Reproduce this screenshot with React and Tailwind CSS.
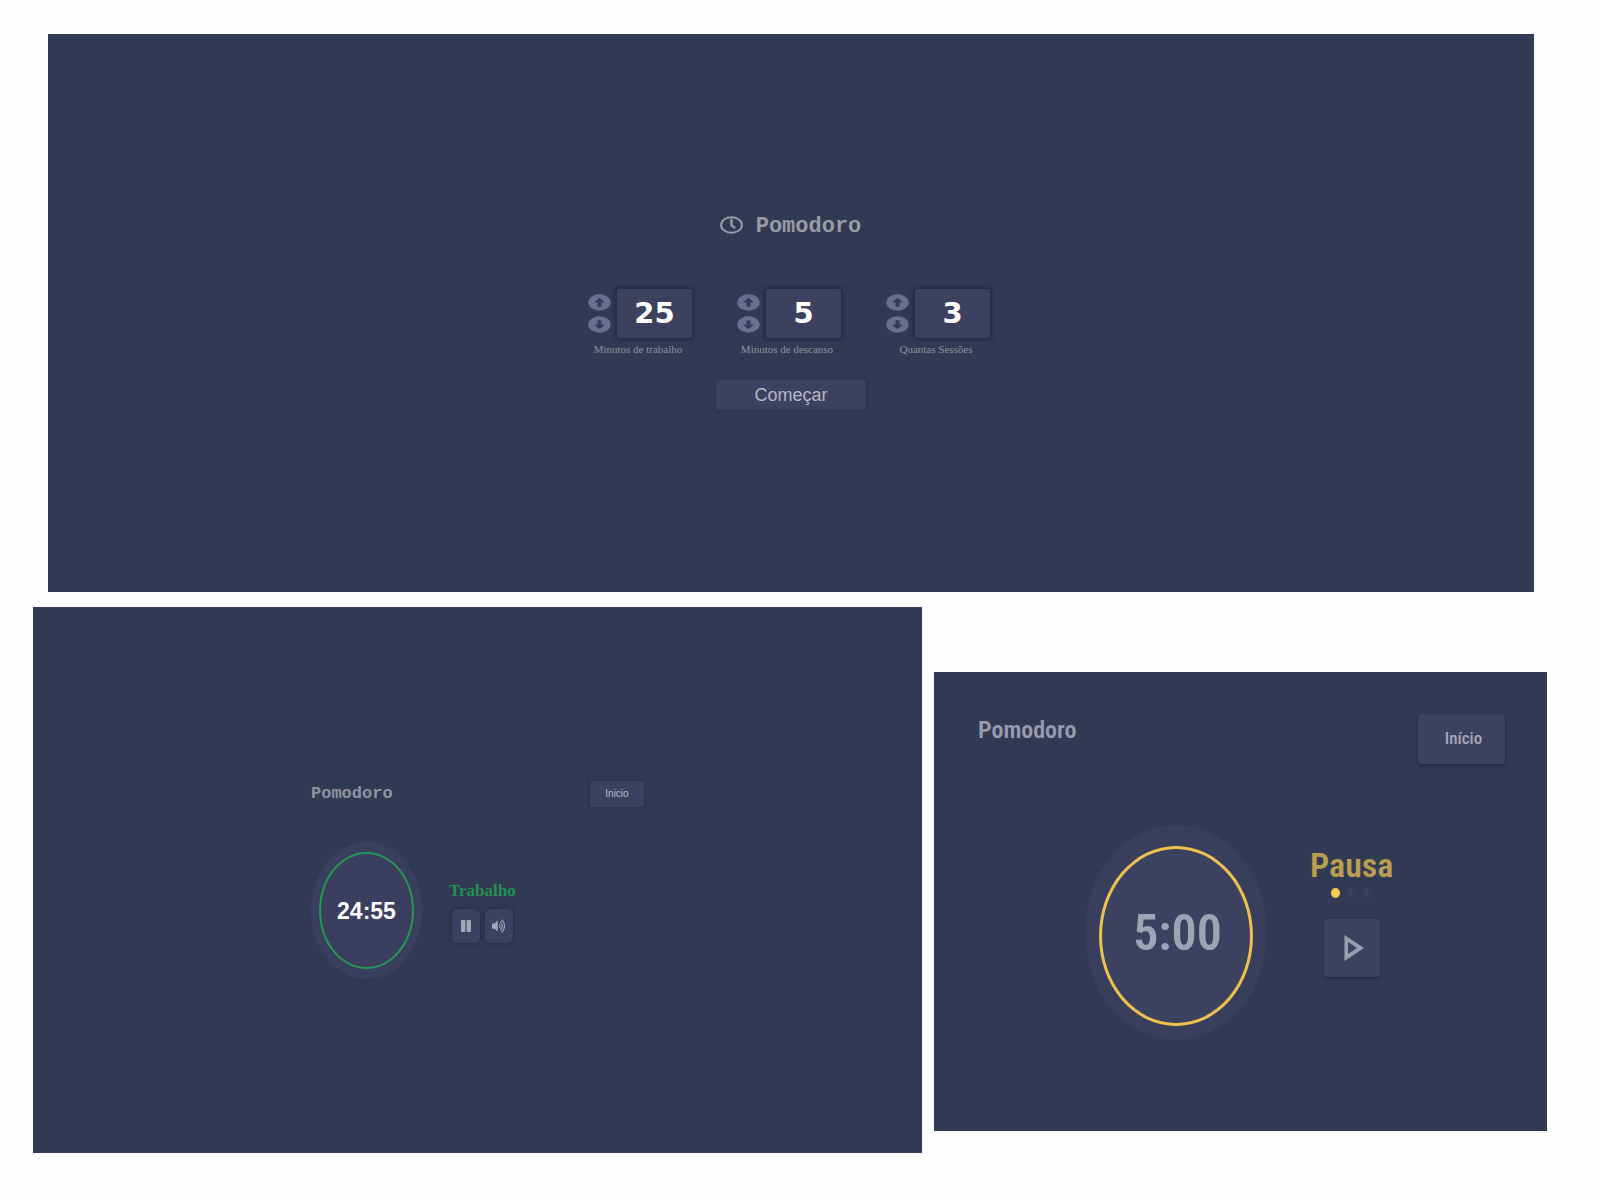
import { useState } from "react";
import { FaVolumeUp } from "react-icons/fa";

function ArrowButton({ down, label, onClick }) {
  return (
    <button type="button" aria-label={label} onClick={onClick} className="block h-[17px] w-[23px]">
      <svg viewBox="0 0 23 17" className={down ? "h-full w-full rotate-180" : "h-full w-full"}>
        <ellipse cx="11.5" cy="8.5" rx="11.2" ry="8.3" fill="#6a6e8f" />
        <path d="M11.5 3.8 L17 8.6 H13.5 V12.8 H9.5 V8.6 H6 Z" fill="#373b5a" />
      </svg>
    </button>
  );
}

function Setting({ id, label, initial }) {
  const [value, setValue] = useState(initial);
  return (
    <div className="flex w-[104px] flex-col">
      <div className="flex items-center gap-[6px]">
        <div className="flex flex-col gap-[5px] pb-px">
          <ArrowButton label={`Aumentar ${label}`} onClick={() => setValue(value + 1)} />
          <ArrowButton down label={`Diminuir ${label}`} onClick={() => setValue(Math.max(1, value - 1))} />
        </div>
        <input
          id={id}
          type="text"
          inputMode="numeric"
          value={value}
          onChange={(e) => setValue(Number(e.target.value) || 1)}
          className="h-[49px] w-[75px] rounded-[2px] bg-[#3d4160] pb-[2px] text-center font-['DejaVu_Sans',sans-serif] text-[29px] font-bold text-white shadow-[0_0_4px_1px_#1e2344]"
        />
      </div>
      <label
        htmlFor={id}
        className="mt-[3px] whitespace-nowrap pr-1 text-center font-['Liberation_Serif',serif] text-[11px] leading-4 text-[#90939f]"
      >
        {label}
      </label>
    </div>
  );
}

function SetupPanel() {
  return (
    <section className="ml-[15px] mr-[13px] flex h-[558px] flex-col items-center bg-[#323952] pt-[177px]">
      <h1 className="flex items-center gap-3 pr-px font-['Liberation_Mono',monospace] text-[22px] font-bold leading-6 text-[#999ba7]">
        <svg viewBox="0 0 24 18" className="h-[18px] w-6" fill="none" stroke="currentColor" strokeWidth="2">
          <ellipse cx="11.5" cy="9" rx="10.4" ry="7.8" />
          <path d="M11.5 4 V9.4 L14.5 11.6" strokeWidth="2.4" strokeLinecap="round" />
        </svg>
        <span className="pt-1">Pomodoro</span>
      </h1>
      <div className="mt-[50px] flex gap-[45px] pr-1">
        <Setting id="work" label="Minutos de trabalho" initial={25} />
        <Setting id="rest" label="Minutos de descanso" initial={5} />
        <Setting id="sessions" label="Quantas Sessões" initial={3} />
      </div>
      <button
        type="button"
        className="mt-[23px] h-[30px] w-[150px] rounded-[2px] bg-[#3d4160] font-['Liberation_Sans',sans-serif] text-[18px] leading-6 text-[#b6b7c0] shadow-[0_0_3px_#262b4a]"
      >
        Começar
      </button>
    </section>
  );
}

function WorkPanel() {
  return (
    <section className="h-[546px] bg-[#323952] pl-[278px] pt-[174px]">
      <div className="w-[333px]">
        <header className="flex items-center justify-between">
          <h2 className="font-['Liberation_Mono',monospace] text-[17px] font-bold leading-6 text-[#9193a1]">Pomodoro</h2>
          <button
            type="button"
            className="h-[26px] w-[54px] rounded-[2px] bg-[#3d4160] font-['Liberation_Sans',sans-serif] text-[10px] leading-4 text-[#bcbdc6] shadow-[0_0_3px_#262b4a]"
          >
            Inicio
          </button>
        </header>
        <div className="mt-[35px] flex items-center gap-[27px]">
          <div className="grid h-[137px] w-[111px] place-items-center rounded-[50%] bg-[#3b3f5f]">
            <div className="grid h-[117px] w-[95px] place-items-center rounded-[50%] border-2 border-[#279655]">
              <p className="font-['Liberation_Sans',sans-serif] text-[23px] font-bold leading-8 text-white">24:55</p>
            </div>
          </div>
          <div className="flex flex-col items-center">
            <p className="font-['Liberation_Serif',serif] text-[17px] font-bold leading-6 text-[#259052]">Trabalho</p>
            <div className="mt-[6px] flex gap-[5px]">
              <button
                type="button"
                aria-label="Pausar"
                className="grid h-[34px] w-7 place-items-center rounded-md bg-[#3d4160] text-[#a6a8b7] shadow-[0_0_4px_#242947]"
              >
                <svg viewBox="0 0 10 12" className="h-3 w-[10px]" fill="currentColor">
                  <rect width="4.4" height="12" rx="0.8" />
                  <rect x="5.6" width="4.4" height="12" rx="0.8" />
                </svg>
              </button>
              <button
                type="button"
                aria-label="Som"
                className="grid h-[34px] w-7 place-items-center rounded-md bg-[#3d4160] text-[#a6a8b7] shadow-[0_0_4px_#242947]"
              >
                <FaVolumeUp preserveAspectRatio="none" className="h-[14px] w-[13px]" />
              </button>
            </div>
          </div>
        </div>
      </div>
    </section>
  );
}

function BreakPanel() {
  return (
    <section className="mt-[65px] h-[459px] bg-[#323952] pl-[44px] pr-[42px] pt-[42px] font-['Roboto_Condensed','Roboto',sans-serif]">
      <header className="flex items-start justify-between">
        <h2 className="text-[24px] font-semibold leading-8 text-[#999cae]">Pomodoro</h2>
        <button
          type="button"
          className="h-[50px] w-[87px] rounded bg-[#3d4160] pb-[2px] pl-1 text-[17px] font-medium leading-6 text-[#a6a8b9] shadow-[0_2px_3px_#242a45]"
        >
          Início
        </button>
      </header>
      <div className="ml-[107px] mt-[61px] flex items-start gap-[43px]">
        <div className="grid h-[215px] w-[182px] place-items-center rounded-[50%] bg-[#393e5c] pt-[6px]">
          <div className="grid h-[180px] w-[154px] place-items-center rounded-[50%] border-[3px] border-[#e9c250] bg-[#3d4160] pb-[6px] pl-[3px]">
            <p className="text-[50px] font-semibold leading-[56px] text-[#9fa3b5]">5:00</p>
          </div>
        </div>
        <div className="flex flex-col items-center pt-5">
          <p className="text-[34px] font-semibold leading-10 text-[#b79f4d]">Pausa</p>
          <div className="mt-[3px] flex gap-[7px]">
            <span className="h-[10px] w-[9px] rounded-[50%] bg-[#f4cb50]" />
            <span className="h-[10px] w-[9px] rounded-[50%] bg-[#3a3d5b]" />
            <span className="h-[10px] w-[9px] rounded-[50%] bg-[#3a3d5b]" />
          </div>
          <button
            type="button"
            aria-label="Iniciar"
            className="mt-[21px] grid h-[58px] w-14 place-items-center rounded bg-[#3d4160] pl-1 text-[#9a9eb1] shadow-[0_2px_3px_#242a45]"
          >
            <svg viewBox="0 0 20 26" className="h-[26px] w-5">
              <path
                fill="currentColor"
                fillRule="evenodd"
                d="M0.5 0 L20 13 L0.5 26 Z M4 7 L13 13 L4 19 Z"
              />
            </svg>
          </button>
        </div>
      </div>
    </section>
  );
}

export default function App() {
  return (
    <main className="min-h-screen bg-[#fefefe] pb-[47px] pl-[33px] pr-[53px] pt-[34px]">
      <SetupPanel />
      <div className="mt-[15px] grid grid-cols-[889fr_613fr] items-start gap-3">
        <WorkPanel />
        <BreakPanel />
      </div>
    </main>
  );
}
